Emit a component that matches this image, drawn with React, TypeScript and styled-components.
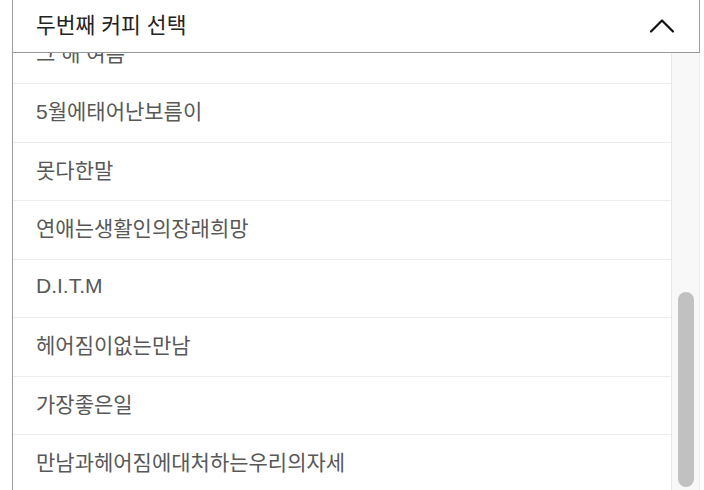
import { useLayoutEffect, useRef } from "react";
import { styled, createGlobalStyle } from "styled-components";

const GlobalStyle = createGlobalStyle`
  html, body {
    margin: 0;
    padding: 0;
    background: #ffffff;
    overflow: hidden;
  }
  body {
    font-family: "Liberation Sans", "Noto Sans CJK KR", sans-serif;
  }
`;

const Page = styled.div`
  width: 704px;
  height: 490px;
  padding-left: 12px;
  box-sizing: border-box;
  display: flex;
  flex-direction: column;
`;

const Dropdown = styled.div`
  width: 688px;
  height: 100%;
  display: flex;
  flex-direction: column;
`;

const Header = styled.div`
  height: 53px;
  flex-shrink: 0;
  box-sizing: border-box;
  border: 1px solid #9a9a9a;
  border-top: none;
  display: flex;
  align-items: center;
  justify-content: space-between;
  padding: 0 24px 0 23px;
`;

const HeaderTitle = styled.span`
  font-size: 21.5px;
  color: #222222;
  padding-bottom: 5px;
`;

const Panel = styled.div`
  flex: 1;
  min-height: 0;
  display: flex;
  border-left: 1px solid #9a9a9a;
`;

const Viewport = styled.div`
  flex: 1;
  overflow: hidden;
`;

const Row = styled.div`
  height: 58.5px;
  box-sizing: border-box;
  border-bottom: 1px solid #ececec;
  display: flex;
  align-items: center;
  padding: 0 0 5px 23px;
  font-size: 21px;
  color: #585858;
`;

const Track = styled.div`
  width: 29px;
  flex-shrink: 0;
  background: #f8f8f8;
  border-left: 1px solid #e8e8e8;
  border-right: 1px solid #ececec;
  box-sizing: border-box;
  display: flex;
  justify-content: center;
  padding-top: 239px;
`;

const Thumb = styled.div`
  width: 16px;
  height: 195px;
  border-radius: 8px;
  background: #c1c1c1;
`;

const items = [
  "여름밤",
  "그 해 여름",
  "5월에태어난보름이",
  "못다한말",
  "연애는생활인의장래희망",
  "D.I.T.M",
  "헤어짐이없는만남",
  "가장좋은일",
  "만남과헤어짐에대처하는우리의자세",
  "커피와 담배",
];

function ChevronUp() {
  return (
    <svg width="26" height="16" viewBox="0 0 26 16">
      <path
        d="M2 13.5 L13 2.5 L24 13.5"
        fill="none"
        stroke="#111"
        strokeWidth="2.2"
        strokeLinecap="round"
        strokeLinejoin="round"
      />
    </svg>
  );
}

export default function App() {
  const viewRef = useRef<HTMLDivElement>(null);

  useLayoutEffect(() => {
    if (viewRef.current) viewRef.current.scrollTop = 86;
  }, []);

  return (
    <>
      <GlobalStyle />
      <Page>
        <Dropdown>
          <Header>
            <HeaderTitle>두번째 커피 선택</HeaderTitle>
            <ChevronUp />
          </Header>
          <Panel>
            <Viewport ref={viewRef}>
              {items.map((item) => (
                <Row key={item}>{item}</Row>
              ))}
            </Viewport>
            <Track>
              <Thumb />
            </Track>
          </Panel>
        </Dropdown>
      </Page>
    </>
  );
}
